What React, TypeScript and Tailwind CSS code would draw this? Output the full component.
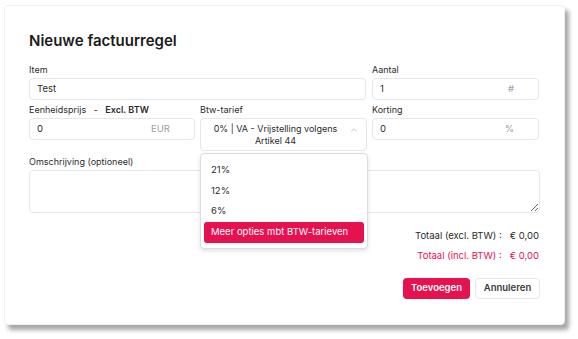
import { ChevronUp } from "lucide-react";

const Label = ({ children }: { children: React.ReactNode }) => (
  <div className="h-[14px] text-[9px] leading-[14px] text-[#2b2b2b]">{children}</div>
);

const Field = ({ value, suffix }: { value: string; suffix?: string }) => (
  <div className="flex h-[22px] items-center justify-between rounded-[4px] border border-[#e6e7ea] bg-white pl-[7px] pr-[24px] text-[9.5px] text-[#2b2b2b]">
    <span>{value}</span>
    {suffix && <span className="text-[#9b9ea4]">{suffix}</span>}
  </div>
);

const options = ["21%", "12%", "6%"];

export default function App() {
  return (
    <div className="h-[339px] w-[578px] bg-white font-['Inter',sans-serif]">
      <div className="ml-[4px] pt-[5px]">
        <div className="h-[320px] w-[561px] rounded-[4px] border border-[#f0f0f0] bg-white px-[24px] pt-[23px] shadow-[4px_5px_4px_rgba(60,60,60,0.45)]">
          <h1 className="text-[15px] font-semibold leading-[24px] text-[#1b1b1b]">Nieuwe factuurregel</h1>

          <div className="mt-[10px] grid grid-cols-[337px_167px] gap-x-[6px]">
            <div>
              <Label>Item</Label>
              <div className="mt-[1px]">
                <Field value="Test" />
              </div>
            </div>
            <div>
              <Label>Aantal</Label>
              <div className="mt-[1px]">
                <Field value="1" suffix="#" />
              </div>
            </div>
          </div>

          <div className="mt-[3px] grid grid-cols-[166px_167px_167px] gap-x-[5px]">
            <div>
              <Label>
                Eenheidsprijs <span className="mx-[5px]">-</span> <span className="font-semibold">Excl. BTW</span>
              </Label>
              <div className="mt-[1px]">
                <Field value="0" suffix="EUR" />
              </div>
            </div>
            <div className="relative">
              <Label>Btw-tarief</Label>
              <div className="relative mt-[1px] flex h-[33px] items-center rounded-[4px] border border-[#e6e7ea] bg-white pl-[10px] pr-[26px] text-center text-[9px] leading-[12px] text-[#2b2b2b]">
                <span className="w-full">0% | VA - Vrijstelling volgens Artikel 44</span>
                <ChevronUp className="absolute right-[7px] top-[6px] h-[10px] w-[10px] text-[#a0a3a8]" strokeWidth={1.5} />
              </div>
              <div className="absolute left-0 top-[50px] z-10 w-[168px] rounded-[4px] border border-[#dcdde0] bg-white px-[3px] pb-[5px] pt-[6px] text-[9.5px] text-[#2b2b2b] shadow-[0_2px_4px_rgba(0,0,0,0.12)]">
                {options.map((o) => (
                  <div key={o} className="flex h-[20.5px] items-center px-[7px]">
                    {o}
                  </div>
                ))}
                <div className="flex h-[21.5px] items-center rounded-[3px] bg-[#e8114f] px-[7px] text-white">
                  Meer opties mbt BTW-tarieven
                </div>
              </div>
            </div>
            <div>
              <Label>Korting</Label>
              <div className="mt-[1px]">
                <Field value="0" suffix="%" />
              </div>
            </div>
          </div>

          <div className="mt-[4px]">
            <Label>Omschrijving (optioneel)</Label>
            <textarea className="mt-[1px] block h-[43px] w-[511px] resize-y rounded-[4px] border border-[#e6e7ea] bg-white" />
          </div>

          <div className="mt-[17px] flex flex-col items-end gap-[8px] pr-[1px] text-[9.5px] leading-[12px]">
            <div className="flex text-[#2b2b2b]">
              <span>Totaal (excl. BTW) :</span>
              <span className="ml-[8px]">€ 0,00</span>
            </div>
            <div className="flex text-[#e8114f]">
              <span>Totaal (incl. BTW) :</span>
              <span className="ml-[8px]">€ 0,00</span>
            </div>
          </div>

          <div className="mt-[16px] flex justify-end gap-[5px]">
            <button className="h-[21px] w-[67px] rounded-[4px] bg-[#e8114f] text-[9.5px] font-semibold text-white">
              Toevoegen
            </button>
            <button className="h-[21px] w-[65px] rounded-[4px] border border-[#e6e7ea] bg-white text-[9.5px] font-semibold text-[#3a3a3a]">
              Annuleren
            </button>
          </div>
        </div>
      </div>
    </div>
  );
}
